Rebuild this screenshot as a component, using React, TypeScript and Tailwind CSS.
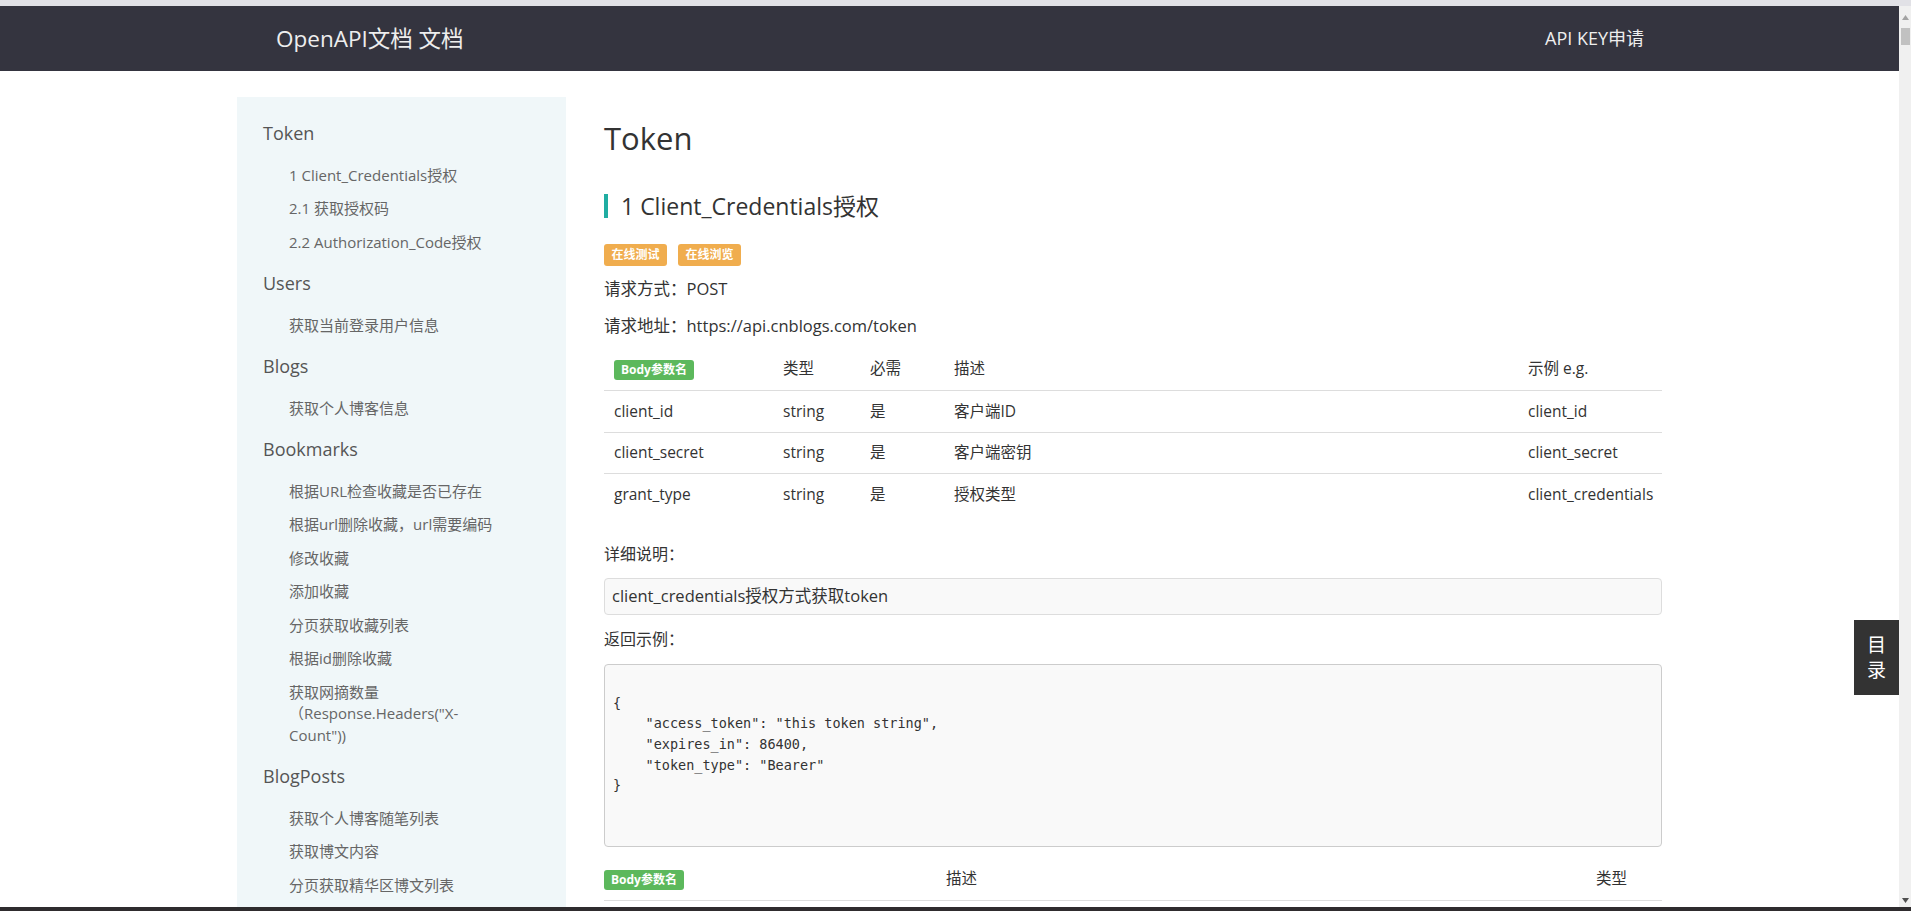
import type { ReactNode } from "react";

type NavGroup = { title: string; items: ReactNode[] };

const NAV: NavGroup[] = [
  {
    title: "Token",
    items: ["1 Client_Credentials授权", "2.1 获取授权码", "2.2 Authorization_Code授权"],
  },
  { title: "Users", items: ["获取当前登录用户信息"] },
  { title: "Blogs", items: ["获取个人博客信息"] },
  {
    title: "Bookmarks",
    items: [
      "根据URL检查收藏是否已存在",
      "根据url删除收藏，url需要编码",
      "修改收藏",
      "添加收藏",
      "分页获取收藏列表",
      "根据id删除收藏",
      <>
        获取网摘数量
        <br />
        （Response.Headers("X-
        <br />
        Count"))
      </>,
    ],
  },
  { title: "BlogPosts", items: ["获取个人博客随笔列表", "获取博文内容", "分页获取精华区博文列表"] },
];

const PARAMS = [
  { name: "client_id", type: "string", req: "是", desc: "客户端ID", eg: "client_id" },
  { name: "client_secret", type: "string", req: "是", desc: "客户端密钥", eg: "client_secret" },
  { name: "grant_type", type: "string", req: "是", desc: "授权类型", eg: "client_credentials" },
];

const CODE = `{
    "access_token": "this token string",
    "expires_in": 86400,
    "token_type": "Bearer"
}`;

function BodyLabel() {
  return (
    <span className="inline-flex h-[20px] items-center rounded-[3px] bg-[#5cb85c] px-[7px] text-[12px] font-bold text-white">
      Body参数名
    </span>
  );
}

function Sidebar() {
  return (
    <aside className="h-[900px] w-[329px] shrink-0 bg-[#f0f7f9] pt-[12px]">
      {NAV.map((g) => (
        <div key={g.title}>
          <div className="flex h-[49.5px] items-center pl-[26px] text-[18px] text-[#555]">{g.title}</div>
          <ul>
            {g.items.map((it, i) => (
              <li key={i} className="py-[6px] pl-[52px] text-[15px] leading-[21.5px] text-[#666]">
                {it}
              </li>
            ))}
          </ul>
        </div>
      ))}
    </aside>
  );
}

function Content() {
  return (
    <main className="w-[1058px] shrink-0 pt-[21px] text-[#333]">
      <h1 className="h-[40px] text-[31px] leading-[40px]">Token</h1>
      <h2 className="mt-[36px] h-[24px] border-l-4 border-[#20ada2] pl-[13px] text-[23px] leading-[24px]">
        1 Client_Credentials授权
      </h2>

      <div className="mt-[26px] flex gap-[11px]">
        <span className="h-[22px] rounded-[3px] bg-[#f0ad4e] px-[7.5px] text-[12px] font-bold leading-[22px] text-white">在线测试</span>
        <span className="h-[22px] rounded-[3px] bg-[#f0ad4e] px-[7.5px] text-[12px] font-bold leading-[22px] text-white">在线浏览</span>
      </div>

      <p className="mt-[11px] text-[16.5px] leading-[24px]">请求方式：POST</p>
      <p className="mt-[13px] text-[16.5px] leading-[24px]">请求地址：https://api.cnblogs.com/token</p>

      <div className="mt-[10px] text-[15.5px]">
        <div className="grid h-[43px] grid-cols-[169px_87px_84px_574px_1fr] items-center border-b border-[#ddd] [&>*]:pl-[10px]">
          <div>
            <BodyLabel />
          </div>
          <div>类型</div>
          <div>必需</div>
          <div>描述</div>
          <div>示例 e.g.</div>
        </div>
        {PARAMS.map((p, i) => (
          <div
            key={p.name}
            className={`grid h-[41.5px] grid-cols-[169px_87px_84px_574px_1fr] items-center [&>*]:pl-[10px] ${
              i < PARAMS.length - 1 ? "border-b border-[#ddd]" : ""
            }`}
          >
            <div>{p.name}</div>
            <div>{p.type}</div>
            <div>{p.req}</div>
            <div>{p.desc}</div>
            <div>{p.eg}</div>
          </div>
        ))}
      </div>

      <p className="mt-[26px] text-[16px] leading-[24px]">详细说明：</p>
      <div className="mt-[12px] flex h-[37px] items-center rounded-[4px] border border-[#ddd] bg-[#f9f9f9] px-[7px] text-[16.5px]">
        client_credentials授权方式获取token
      </div>

      <p className="mt-[12px] text-[16px] leading-[24px]">返回示例：</p>
      <pre className="mt-[13px] h-[183px] rounded-[4px] border border-[#ccc] bg-[#f9f9f9] pl-[8px] pt-[28px] font-['DejaVu_Sans_Mono',monospace] text-[13.5px] leading-[20.7px] text-[#333]">
        {CODE}
      </pre>

      <div className="mt-[11px] grid h-[43px] grid-cols-[342px_650px_1fr] items-center border-b border-[#ddd] text-[15.5px]">
        <div>
          <BodyLabel />
        </div>
        <div>描述</div>
        <div>类型</div>
      </div>
    </main>
  );
}

function Scrollbar() {
  return (
    <div className="relative w-[12px] shrink-0 bg-[#f0f0f0]">
      <svg className="absolute left-[3px] top-[9px]" width="7" height="5" viewBox="0 0 7 5">
        <path d="M3.5 0 L7 5 L0 5 Z" fill="#a3a3a3" />
      </svg>
      <div className="absolute left-[2px] top-[22px] h-[17px] w-[9px] bg-[#c1c1c1]" />
      <svg className="absolute bottom-[4px] left-[3px]" width="7" height="5" viewBox="0 0 7 5">
        <path d="M0 0 L7 0 L3.5 5 Z" fill="#505050" />
      </svg>
    </div>
  );
}

export default function App() {
  return (
    <div className="relative flex h-[911px] w-[1911px] flex-col overflow-hidden bg-white font-['Open_Sans','Noto_Sans_CJK_SC',sans-serif]">
      <div className="h-[6px] shrink-0 bg-[#e1e1e6]" />
      <div className="flex min-h-0 flex-1">
        <div className="min-w-0 flex-1 overflow-hidden">
          <header className="h-[65px] bg-[#34343f]">
            <div className="mx-auto flex h-full w-[1425px] items-center justify-between pl-[39px] pr-[18px]">
              <span className="text-[22.5px] text-[#eeeeee]">OpenAPI文档 文档</span>
              <span className="text-[18px] text-[#eeeeee]">API KEY申请</span>
            </div>
          </header>
          <div className="mx-auto mt-[26px] flex w-[1425px] gap-[38px]">
            <Sidebar />
            <Content />
          </div>
        </div>
        <Scrollbar />
      </div>
      <div className="h-[4px] shrink-0 bg-[#2f2c2e]" />

      <div className="absolute left-[1854px] top-[620px] flex h-[75px] w-[45px] flex-col items-center justify-center bg-[#333] text-[19px] leading-[25px] text-white">
        <span>目</span>
        <span>录</span>
      </div>
    </div>
  );
}
